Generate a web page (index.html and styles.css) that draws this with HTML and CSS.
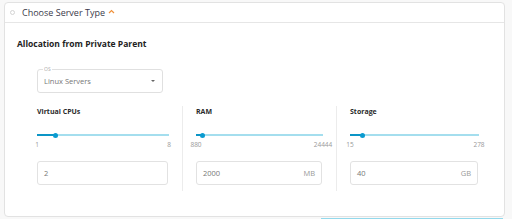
FILE: index.html
```html
<!DOCTYPE html>
<html>
<head>
<meta charset="utf-8">
<link rel="stylesheet" href="styles.css">
</head>
<body>
<div class="card">
  <div class="card-header">
    <span class="dot"></span>
    <span class="header-title">Choose Server Type</span>
    <svg class="chev" width="7" height="5" viewBox="0 0 7 5"><path d="M1 4 L3.5 1.5 L6 4" fill="none" stroke="#f0913a" stroke-width="1.2"/></svg>
  </div>
  <div class="card-body">
    <div class="section-title">Allocation from Private Parent</div>
    <div class="inner">
      <div class="select">
        <span class="notch">OS</span>
        <span class="select-value">Linux Servers</span>
        <span class="caret"></span>
      </div>
      <div class="cols">
        <div class="col col1">
          <div class="col-label">Virtual CPUs</div>
          <div class="slider">
            <div class="track-active" style="width:14.3%"></div>
            <div class="thumb"></div>
            <div class="track-rest"></div>
          </div>
          <div class="marks"><span class="mark">1</span><span class="mark">8</span></div>
          <div class="input"><span class="val">2</span><span class="unit"></span></div>
        </div>
        <div class="col col2">
          <div class="col-label">RAM</div>
          <div class="slider">
            <div class="track-active" style="width:4.75%"></div>
            <div class="thumb"></div>
            <div class="track-rest"></div>
          </div>
          <div class="marks"><span class="mark">880</span><span class="mark">24444</span></div>
          <div class="input"><span class="val">2000</span><span class="unit">MB</span></div>
        </div>
        <div class="col col3">
          <div class="col-label">Storage</div>
          <div class="slider">
            <div class="track-active" style="width:9.5%"></div>
            <div class="thumb"></div>
            <div class="track-rest"></div>
          </div>
          <div class="marks"><span class="mark">15</span><span class="mark">278</span></div>
          <div class="input"><span class="val">40</span><span class="unit">GB</span></div>
        </div>
      </div>
    </div>
  </div>
</div>
<div class="bottom-line"></div>
</body>
</html>
```

FILE: styles.css
```css
html, body {
  margin: 0;
  padding: 0;
}
body {
  background: #f8f8f8;
  font-family: "Open Sans", "Liberation Sans", sans-serif;
  width: 512px;
  height: 219px;
  overflow: hidden;
  padding: 2px 7px 0 4px;
  box-sizing: border-box;
}
.card {
  background: #fff;
  border: 1px solid #e2e2e2;
  border-radius: 4px;
  height: 215px;
  box-sizing: border-box;
}
.card-header {
  height: 20px;
  box-sizing: border-box;
  border-bottom: 1px solid #e6e6e6;
  display: flex;
  align-items: center;
  padding-left: 5px;
}
.dot {
  width: 3px;
  height: 3px;
  border: 1px solid #d4d4d4;
  border-radius: 50%;
  margin-right: 7px;
}
.header-title {
  font-size: 9px;
  color: #3a3a4a;
  line-height: 12px;
}
.chev {
  margin-left: 3px;
  margin-top: -2px;
}
.card-body {
  padding: 15px 12px 0 12px;
}
.section-title {
  font-size: 8.5px;
  font-weight: 700;
  color: #222;
  line-height: 12px;
}
.inner {
  margin-left: 20px;
}
.select {
  position: relative;
  margin-top: 19px;
  width: 126px;
  height: 24px;
  box-sizing: border-box;
  border: 1px solid #e0e0e0;
  border-radius: 3px;
  display: flex;
  align-items: center;
  padding: 0 6px;
}
.notch {
  position: absolute;
  left: 5px;
  top: -4px;
  font-size: 5px;
  line-height: 6px;
  color: #aaa;
  background: #fff;
  padding: 0 1px;
}
.select-value {
  flex: 1;
  font-size: 7.5px;
  color: #777;
}
.caret {
  width: 0;
  height: 0;
  border-left: 2px solid transparent;
  border-right: 2px solid transparent;
  border-top: 2px solid #666;
  margin-right: 1px;
}
.cols {
  display: flex;
  margin-top: 13px;
}
.col {
  border-right: 1px solid #ececec;
  padding-bottom: 6px;
  box-sizing: border-box;
}
.col1 {
  width: 146px;
  padding-right: 13px;
}
.col2 {
  width: 154px;
  padding-left: 13px;
  padding-right: 13px;
}
.col3 {
  width: 142px;
  padding-left: 13px;
  border-right: none;
}
.col-label {
  font-size: 7px;
  font-weight: 700;
  color: #2a2a2a;
  line-height: 12px;
}
.slider {
  margin-top: 12px;
  height: 10px;
  display: flex;
  align-items: center;
}
.track-active {
  height: 2px;
  background: #0c95c6;
}
.thumb {
  width: 5px;
  height: 5px;
  border-radius: 50%;
  background: #0a9bd0;
  margin: 0 -2.5px;
  position: relative;
  z-index: 1;
}
.track-rest {
  flex: 1;
  height: 2px;
  background: #a4deee;
}
.marks {
  display: flex;
  justify-content: space-between;
  line-height: 9px;
  height: 9px;
}
.mark {
  width: 0;
  display: flex;
  justify-content: center;
  white-space: nowrap;
  font-size: 6.5px;
  color: #999;
}
.input {
  margin-top: 12px;
  height: 24px;
  box-sizing: border-box;
  border: 1px solid #e2e2e2;
  border-radius: 3px;
  display: flex;
  align-items: center;
  padding: 0 6px 0 6px;
  margin-right: 1px;
}
.val {
  flex: 1;
  font-size: 7.5px;
  color: #777;
}
.unit {
  font-size: 7.5px;
  color: #999;
}
.bottom-line {
  margin-left: 317px;
  margin-right: 2px;
  height: 2px;
  margin-top: 1px;
  background: #93d9ec;
}
```
